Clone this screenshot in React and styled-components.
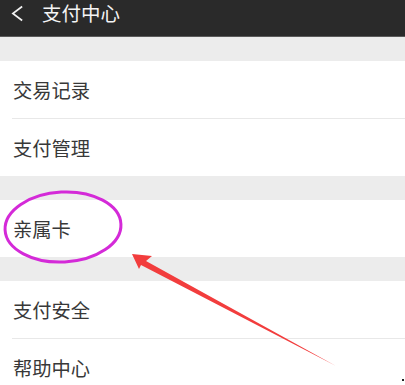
import styled, { createGlobalStyle } from "styled-components";

const GlobalStyle = createGlobalStyle`
  html, body {
    margin: 0;
    padding: 0;
    background: #ececec;
  }
  body {
    font-family: "Noto Sans CJK SC", "Noto Sans", sans-serif;
  }
`;

const sections = [
  ["交易记录", "支付管理"],
  ["亲属卡"],
  ["支付安全", "帮助中心"],
];

const App = () => {
  return (
    <Page>
      <GlobalStyle />
      <Header>
        <BackIcon viewBox="0 0 14 18">
          <polyline points="12,1.5 2,9 12,16.5" />
        </BackIcon>
        <Title>支付中心</Title>
      </Header>
      <Body>
        {sections.map((items, i) => (
          <Section key={i}>
            {items.map((label) => (
              <Row key={label}>{label}</Row>
            ))}
          </Section>
        ))}
      </Body>
      <Markup viewBox="0 0 405 385">
        <ellipse
          cx="63"
          cy="227"
          rx="58"
          ry="35"
          fill="none"
          stroke="#d42ad8"
          strokeWidth="3"
          transform="rotate(-3 63 227)"
        />
        <polygon
          points="132,254 152,256 146,261 336,366 141,265 139,269"
          fill="#f23d3d"
        />
      </Markup>
      <Dot />
    </Page>
  );
};

export default App;

const Page = styled.div`
  position: relative;
  width: 405px;
  height: 385px;
  overflow: hidden;
  background: #ececec;
`;

const Header = styled.div`
  height: 37px;
  box-sizing: border-box;
  border-bottom: 1px solid #5a5a5a;
  background: #2a2a2a;
  display: flex;
  align-items: flex-start;
  padding: 1px 0 0 11px;
  gap: 18px;
`;

const BackIcon = styled.svg`
  width: 13px;
  height: 17px;
  margin-top: 4px;
  fill: none;
  stroke: #f2f2f2;
  stroke-width: 1.8;
`;

const Title = styled.span`
  color: #f4f4f4;
  font-size: 19.5px;
  line-height: 24px;
`;

const Body = styled.div`
  display: flex;
  flex-direction: column;
  gap: 24px;
  padding-top: 24px;
`;

const Section = styled.div`
  background: #fff;
  padding-left: 12px;
`;

const Row = styled.div`
  height: 57px;
  display: flex;
  align-items: center;
  padding-left: 1px;
  padding-right: 5px;
  font-size: 19.3px;
  color: #383838;

  & + & {
    border-top: 1px solid #e8e8e8;
  }
`;

const Markup = styled.svg`
  position: absolute;
  left: 0;
  top: 0;
  width: 405px;
  height: 385px;
  pointer-events: none;
`;

const Dot = styled.span`
  position: absolute;
  right: 1px;
  bottom: 4px;
  width: 2px;
  height: 2px;
  background: #222;
`;
